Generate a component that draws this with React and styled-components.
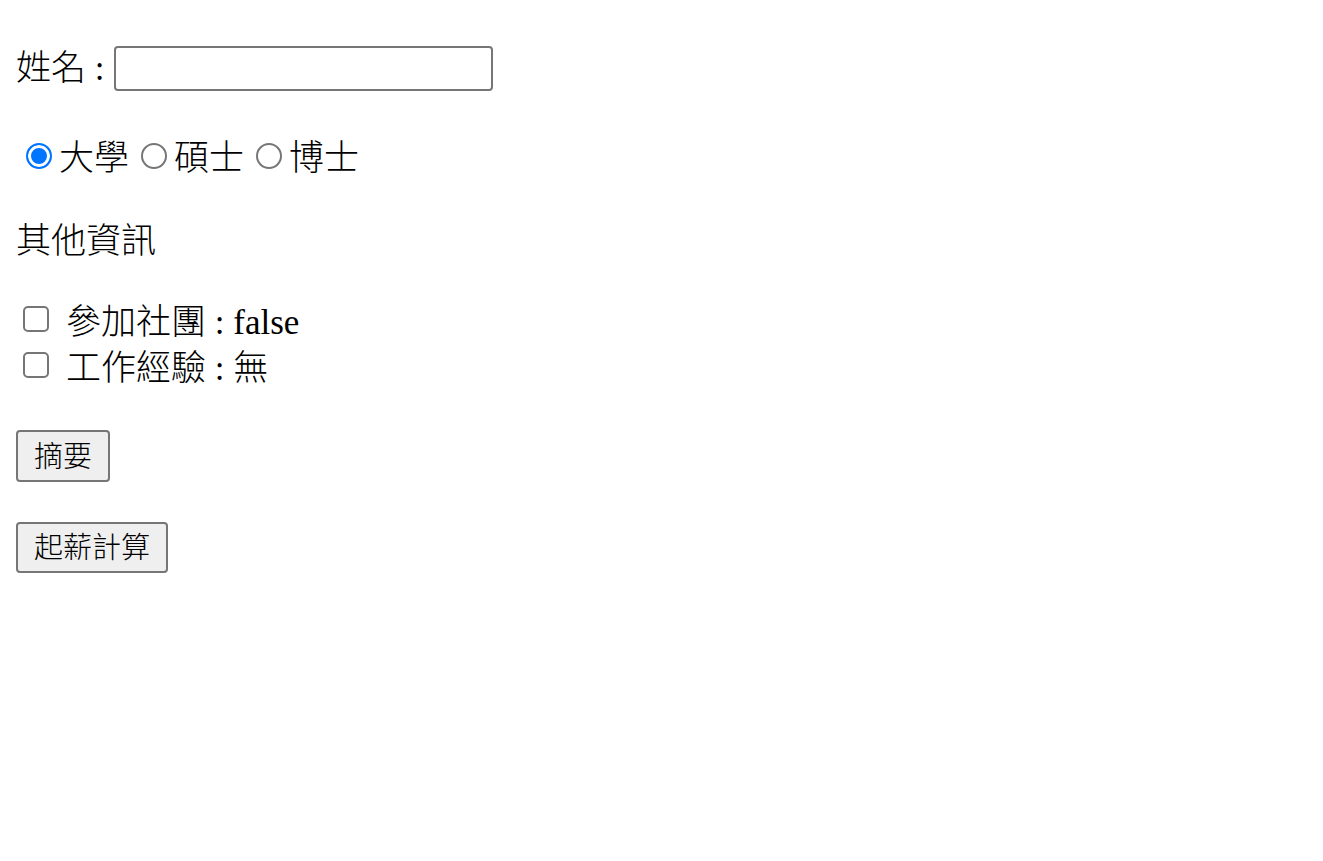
import React, { useState } from "react";
import styled, { createGlobalStyle } from "styled-components";

const GlobalStyle = createGlobalStyle`
  body {
    margin: 0;
    background: #fff;
    color: #000;
    font-family: "Liberation Serif", "Noto Sans CJK TC", serif;
    font-size: 35px;
    font-weight: 300;
  }
`;

const Page = styled.div`
  display: flex;
  flex-direction: column;
  align-items: flex-start;
  padding: 0 16px;
`;

const Row = styled.div`
  display: flex;
  align-items: center;
  height: ${(p) => p.$h}px;
  margin-top: ${(p) => p.$top}px;
  white-space: pre;
`;

/* $down nudges the text line below the centre of its row */
const Label = styled.span`
  line-height: 1;
  margin-top: ${(p) => p.$down || 0}px;
`;

const TextInput = styled.input`
  box-sizing: border-box;
  width: 379px;
  height: 45px;
  margin: 0 0 0 1px;
  padding: 0 4px;
  border: 2px solid #767676;
  border-radius: 4px;
  font-size: 26px;
  font-family: "Liberation Sans", "Noto Sans CJK TC", sans-serif;
  outline: none;
`;

const Option = styled.label`
  display: flex;
  align-items: center;
  margin-right: 2px;
`;

const Radio = styled.input.attrs({ type: "radio" })`
  appearance: none;
  box-sizing: border-box;
  width: 26px;
  height: 26px;
  margin: 0 7px 0 10px;
  border: 2px solid #767676;
  border-radius: 50%;
  background: #fff;

  &:checked {
    border-color: #0075ff;
    background: #0075ff;
    box-shadow: inset 0 0 0 3px #fff;
  }
`;

const Check = styled.input.attrs({ type: "checkbox" })`
  appearance: none;
  box-sizing: border-box;
  width: 26px;
  height: 26px;
  margin: 0 17px 0 7px;
  border: 2px solid #767676;
  border-radius: 5px;
  background: #fff;
`;

const Button = styled.button`
  box-sizing: border-box;
  height: ${(p) => p.$h || 52}px;
  margin-top: ${(p) => p.$top}px;
  padding: 2px 16px 0;
  border: 2px solid #767676;
  border-radius: 4px;
  background: #efefef;
  color: #000;
  font-family: "Liberation Sans", "Noto Sans CJK TC", sans-serif;
  font-size: 29px;
  font-weight: 300;
  line-height: 1;
`;

const degrees = ["大學", "碩士", "博士"];

export default function App() {
  const [degree, setDegree] = useState("大學");
  const [club, setClub] = useState(false);
  const [work, setWork] = useState(false);

  return (
    <Page>
      <GlobalStyle />
      <Row $top={46} $h={45}>
        <Label>姓名 : </Label>
        <TextInput type="text" />
      </Row>

      <Row $top={45} $h={40}>
        {degrees.map((d) => (
          <Option key={d}>
            <Radio
              name="degree"
              checked={degree === d}
              onChange={() => setDegree(d)}
            />
            <Label $down={4}>{d}</Label>
          </Option>
        ))}
      </Row>

      <Row $top={41} $h={40}>
        <Label $down={8}>其他資訊</Label>
      </Row>

      <Row $top={39} $h={46}>
        <Check checked={club} onChange={() => setClub(!club)} />
        <Label $down={6}>參加社團 : {String(club)}</Label>
      </Row>
      <Row $top={0} $h={46}>
        <Check checked={work} onChange={() => setWork(!work)} />
        <Label $down={6}>工作經驗 : {work ? "有" : "無"}</Label>
      </Row>

      <Button $top={42}>摘要</Button>
      <Button $top={40} $h={51}>起薪計算</Button>
    </Page>
  );
}
